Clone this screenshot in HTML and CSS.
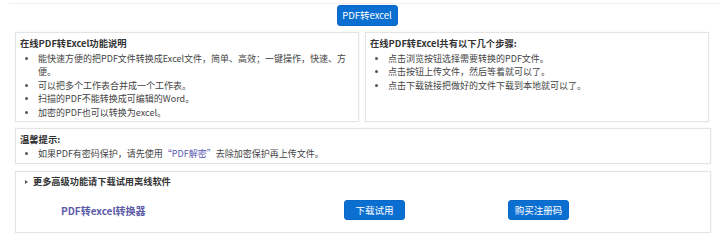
FILE: index.html
```html
<!DOCTYPE html>
<html lang="zh-CN">
<head>
<meta charset="utf-8">
<title>PDF转excel</title>
<link rel="stylesheet" href="styles.css">
</head>
<body>
<div class="topline"></div>
<div class="page">
  <div class="topbar"><button class="btn">PDF转excel</button></div>
  <div class="cols">
    <section class="panel info">
      <h3 class="title">在线PDF转Excel功能说明</h3>
      <ul class="list">
        <li>能快速方便的把PDF文件转换成Excel文件，简单、高效；一键操作，快速、方便。</li>
        <li>可以把多个工作表合并成一个工作表。</li>
        <li>扫描的PDF不能转换成可编辑的Word。</li>
        <li>加密的PDF也可以转换为excel。</li>
      </ul>
    </section>
    <section class="panel info">
      <h3 class="title">在线PDF转Excel共有以下几个步骤:</h3>
      <ul class="list">
        <li>点击浏览按钮选择需要转换的PDF文件。</li>
        <li>点击按钮上传文件，然后等着就可以了。</li>
        <li>点击下载链接把做好的文件下载到本地就可以了。</li>
      </ul>
    </section>
  </div>
  <section class="panel tip">
    <h3 class="title">温馨提示:</h3>
    <ul class="list">
      <li>如果PDF有密码保护，请先使用<a class="link" href="#">“PDF解密”</a>去除加密保护再上传文件。</li>
    </ul>
  </section>
  <section class="panel more">
    <div class="summary"><span class="tri"></span>更多高级功能请下载试用离线软件</div>
    <div class="dl-row">
      <div class="product">PDF转excel转换器</div>
      <div><button class="btn small">下载试用</button></div>
      <div><button class="btn small">购买注册码</button></div>
    </div>
  </section>
</div>
</body>
</html>
```
FILE: styles.css
```css
* { box-sizing: border-box; }
html, body { margin: 0; padding: 0; background: #fff; }
body {
  font-family: "Noto Sans CJK SC", "Noto Sans", sans-serif;
  font-size: 9px;
  color: #444;
  line-height: 13.4px;
}
.topline {
  height: 1px;
  margin: 3px 0 0 9px;
  background: #f0f0f0;
}
.page {
  width: 711px;
  padding-left: 15px;
}
.topbar {
  display: flex;
  justify-content: center;
  padding-top: 1px;
  padding-left: 9px;
  margin-right: 1px;
}
.btn {
  font-family: inherit;
  font-size: 9.5px;
  color: #fff;
  background: #0b6fd2;
  border: 1px solid #0a68c6;
  border-radius: 3px;
  height: 21px;
  width: 61px;
  padding: 0;
  line-height: 19px;
}
.cols {
  display: grid;
  grid-template-columns: 344px 344px;
  gap: 6px;
  margin-top: 6px;
}
.panel {
  border: 1px solid #e4e4e4;
  box-shadow: 0 0 1px #e8e8e8;
  background: #fff;
}
.info {
  height: 90px;
  padding: 4px 4px 0 4px;
}
.title {
  margin: 0 0 1.5px 0;
  font-size: 9.3px;
  font-weight: 700;
  color: #333;
  line-height: 13.4px;
}
.list {
  margin: 0;
  padding: 0 2px 0 18px;
}
.list li::marker { font-size: 8px; color: #555; }
.tip {
  margin-top: 6px;
  height: 36px;
  padding: 4px 4px 0 4px;
}
.tip .title { margin-bottom: 1px; }
.link { color: #5757b0; text-decoration: none; }
.more {
  margin-top: 7px;
  height: 62px;
  padding: 3px 0 0 0;
}
.summary {
  display: flex;
  align-items: center;
  font-weight: 700;
  font-size: 9.2px;
  color: #333;
  padding-left: 9px;
}
.tri {
  width: 0;
  height: 0;
  border-left: 3px solid #555;
  border-top: 2px solid transparent;
  border-bottom: 2px solid transparent;
  margin-right: 5px;
}
.dl-row {
  display: grid;
  grid-template-columns: 328px 164px auto;
  align-items: center;
  margin-top: 12px;
}
.product {
  padding-left: 45px;
  font-weight: 700;
  font-size: 10px;
  color: #5b5ba8;
}
.btn.small { height: 20px; line-height: 18px; }
```
